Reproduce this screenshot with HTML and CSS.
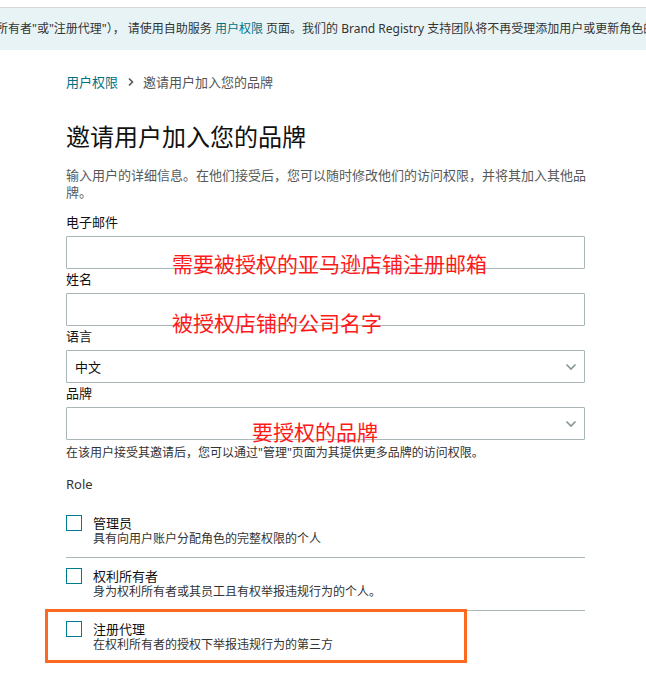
FILE: index.html
```html
<!DOCTYPE html>
<html lang="zh-CN">
<head>
    <meta charset="UTF-8">
    <meta name="viewport" content="width=device-width, initial-scale=1.0">
    <title>邀请用户加入您的品牌 - Brand Registry</title>
    <link rel="stylesheet" href="styles.css">
</head>
<body>
    <div class="notice">
        <p class="notice-text">权利所有者"或"注册代理"）， 请使用自助服务 <a href="#">用户权限</a> 页面。我们的 Brand Registry 支持团队将不再受理添加用户或更新角色的请求。</p>
    </div>

    <div class="page">
        <div class="breadcrumb">
            <a href="#">用户权限</a>
            <span class="crumb-sep">
                <svg width="8" height="10" viewBox="0 0 8 10"><path d="M2 1.5 L5.5 5 L2 8.5" fill="none" stroke="#555" stroke-width="1.6"/></svg>
            </span>
            <span>邀请用户加入您的品牌</span>
        </div>

        <h1>邀请用户加入您的品牌</h1>
        <p class="intro">输入用户的详细信息。在他们接受后，您可以随时修改他们的访问权限，并将其加入其他品牌。</p>

        <form>
            <div class="field">
                <label for="email">电子邮件</label>
                <input type="text" id="email">
                <span class="note note-email">需要被授权的亚马逊店铺注册邮箱</span>
            </div>

            <div class="field">
                <label for="name">姓名</label>
                <input type="text" id="name">
                <span class="note note-name">被授权店铺的公司名字</span>
            </div>

            <div class="field">
                <label for="lang">语言</label>
                <div class="select-wrap">
                    <select id="lang">
                        <option>中文</option>
                    </select>
                    <svg class="chevron" width="12" height="8" viewBox="0 0 12 8"><path d="M1.5 1.5 L6 6 L10.5 1.5" fill="none" stroke="#879596" stroke-width="1.6"/></svg>
                </div>
            </div>

            <div class="field">
                <label for="brand">品牌</label>
                <div class="select-wrap">
                    <select id="brand">
                        <option></option>
                    </select>
                    <svg class="chevron" width="12" height="8" viewBox="0 0 12 8"><path d="M1.5 1.5 L6 6 L10.5 1.5" fill="none" stroke="#879596" stroke-width="1.6"/></svg>
                </div>
                <span class="note note-brand">要授权的品牌</span>
            </div>

            <p class="hint">在该用户接受其邀请后，您可以通过"管理"页面为其提供更多品牌的访问权限。</p>

            <div class="role-title">Role</div>

            <div class="roles">
                <label class="role">
                    <input type="checkbox">
                    <span class="box"></span>
                    <span class="role-text">
                        <span class="role-name">管理员</span>
                        <span class="role-desc">具有向用户账户分配角色的完整权限的个人</span>
                    </span>
                </label>
                <label class="role">
                    <input type="checkbox">
                    <span class="box"></span>
                    <span class="role-text">
                        <span class="role-name">权利所有者</span>
                        <span class="role-desc">身为权利所有者或其员工且有权举报违规行为的个人。</span>
                    </span>
                </label>
                <label class="role role-marked">
                    <input type="checkbox">
                    <span class="box"></span>
                    <span class="role-text">
                        <span class="role-name">注册代理</span>
                        <span class="role-desc">在权利所有者的授权下举报违规行为的第三方</span>
                    </span>
                    <span class="highlight"></span>
                </label>
            </div>
        </form>
    </div>
</body>
</html>
```

FILE: styles.css
```css
* {
    margin: 0;
    padding: 0;
    box-sizing: border-box;
}

body {
    font-family: "Noto Sans", "Noto Sans CJK SC", sans-serif;
    font-size: 13px;
    color: #111;
    background: #fff;
}

a {
    color: #007185;
    text-decoration: none;
}

.notice {
    margin-top: 7px;
    border-top: 1px solid #d5d9d9;
    background: #e8f3f5;
    height: 43px;
    overflow: hidden;
}

.notice-text {
    white-space: nowrap;
    font-size: 12px;
    line-height: 42px;
    margin-left: -28px;
    color: #333;
}

.page {
    padding-left: 66px;
    width: 585px;
}

.breadcrumb {
    margin-top: 23px;
    line-height: 18px;
    color: #555;
    display: flex;
    align-items: center;
}

.crumb-sep {
    display: inline-flex;
    margin: 0 8px 0 9px;
}

h1 {
    margin-top: 31px;
    font-size: 24px;
    font-weight: 400;
    line-height: 30px;
    color: #111;
}

.intro {
    width: 524px;
    margin-top: 15px;
    line-height: 17px;
    color: #565959;
}

form {
    margin-top: 11px;
}

.field {
    position: relative;
}

.field label {
    display: block;
    line-height: 20px;
    margin-bottom: 4px;
}

.field input[type="text"],
.field select {
    display: block;
    width: 100%;
    height: 33px;
    border: 1px solid #aab7b8;
    border-radius: 1px;
    background: #fff;
    font-family: inherit;
    font-size: 13px;
    color: #111;
    padding: 0 8px;
    outline: none;
}

.select-wrap {
    position: relative;
}

.field select {
    appearance: none;
    -webkit-appearance: none;
}

.chevron {
    position: absolute;
    right: 8px;
    top: 13px;
}

.note {
    position: absolute;
    color: #ff1a1a;
    font-family: "Noto Sans CJK SC", sans-serif;
    font-size: 21px;
    line-height: 24px;
    white-space: nowrap;
    pointer-events: none;
}

.note-email {
    left: 106px;
    top: 39px;
}

.note-name {
    left: 106px;
    top: 41px;
}

.note-brand {
    left: 186px;
    top: 36px;
}

.hint {
    margin-top: 5px;
    font-size: 12px;
    line-height: 16px;
    color: #333;
}

.role-title {
    margin-top: 14px;
    line-height: 18px;
    color: #333;
}

.roles {
    margin-top: 12px;
}

.role {
    position: relative;
    display: flex;
    gap: 11px;
    padding: 10px 0;
    border-bottom: 1px solid #aab7b8;
    cursor: pointer;
}

.role:last-child {
    border-bottom: none;
}

.role input {
    display: none;
}

.box {
    flex: none;
    width: 16px;
    height: 16px;
    border: 1px solid #007a8c;
    background: #fff;
}

.role-text {
    display: flex;
    flex-direction: column;
}

.role-name {
    line-height: 16px;
    color: #111;
}

.role-desc {
    font-size: 12px;
    line-height: 16px;
    color: #333;
}

.highlight {
    position: absolute;
    left: -21px;
    top: -2px;
    width: 422px;
    height: 54px;
    border: 3px solid #fc6a21;
}
```
